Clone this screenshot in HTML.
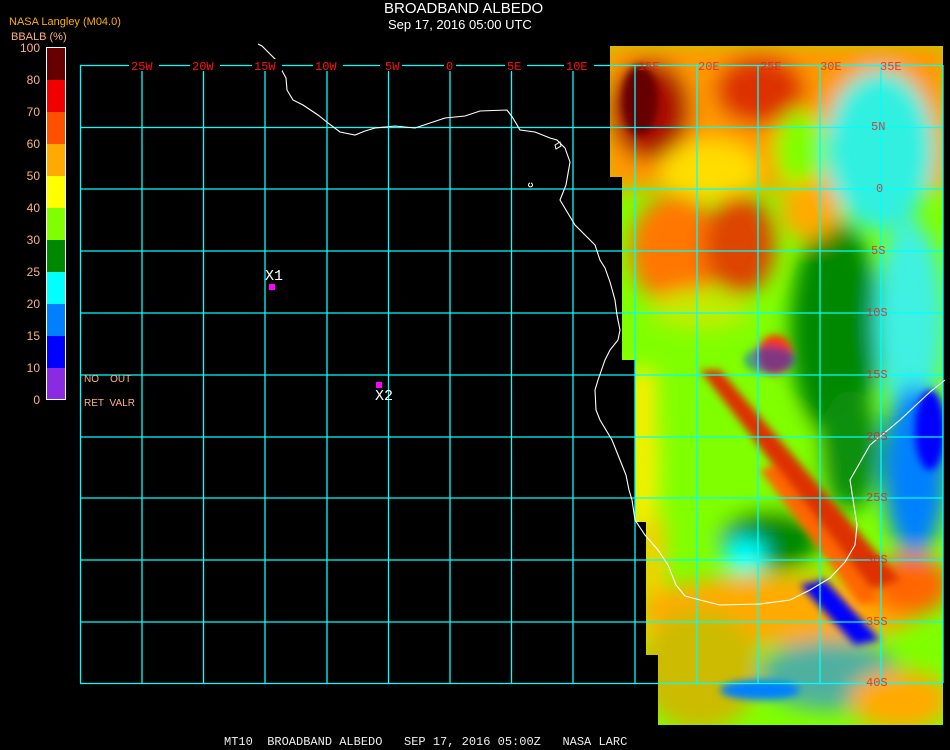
<!DOCTYPE html>
<html><head><meta charset="utf-8"><style>
html,body{margin:0;padding:0;background:#000;width:950px;height:750px;overflow:hidden}
body{position:relative;font-family:"Liberation Sans",sans-serif}
.t{position:absolute;color:#fff;font-size:14px;white-space:nowrap}
</style></head><body>
<svg width="950" height="750" style="position:absolute;left:0;top:0">
<defs>
<clipPath id="dc"><polygon points="610,46 943,46 943,725 658,725 658,655 646,655 646,522 635,522 635,360 622,360 622,177 610,177"/></clipPath>
<filter id="bl" x="-50%" y="-50%" width="200%" height="200%"><feGaussianBlur stdDeviation="10"/></filter>
<filter id="bs" x="-50%" y="-50%" width="200%" height="200%"><feGaussianBlur stdDeviation="4"/></filter>
</defs>
<g clip-path="url(#dc)">
<rect x="600" y="40" width="350" height="700" fill="#80ff00"/>
<g filter="url(#bl)">
<rect x="600" y="40" width="350" height="150" fill="#ff9900"/>
<ellipse cx="650" cy="110" rx="40" ry="50" fill="#aa1100"/>
<ellipse cx="760" cy="90" rx="45" ry="35" fill="#dd3300"/>
<ellipse cx="710" cy="170" rx="50" ry="30" fill="#ffdd00"/>
<ellipse cx="880" cy="150" rx="55" ry="80" fill="#30f0e0"/>
<ellipse cx="800" cy="150" rx="25" ry="40" fill="#80ff00"/>
<ellipse cx="675" cy="250" rx="45" ry="55" fill="#ff7700"/>
<ellipse cx="740" cy="245" rx="35" ry="50" fill="#dd4400"/>
<ellipse cx="700" cy="310" rx="50" ry="20" fill="#c0ee00"/>
<ellipse cx="835" cy="330" rx="45" ry="110" fill="#008800"/>
<ellipse cx="910" cy="320" rx="35" ry="100" fill="#40f0e0"/>
<ellipse cx="915" cy="470" rx="32" ry="85" fill="#0080ff"/>
<ellipse cx="850" cy="450" rx="30" ry="60" fill="#109010"/>
<ellipse cx="810" cy="210" rx="30" ry="30" fill="#ffaa00"/>
<rect x="628" y="370" width="28" height="160" fill="#ffee00"/>
<rect x="640" y="520" width="25" height="140" fill="#ffcc00"/>
<ellipse cx="740" cy="470" rx="80" ry="70" fill="#80ff00"/>
<ellipse cx="770" cy="540" rx="50" ry="30" fill="#008800"/>
<ellipse cx="780" cy="610" rx="140" ry="35" fill="#ffaa00"/>
<ellipse cx="700" cy="670" rx="60" ry="60" fill="#ccbb00"/>
<ellipse cx="830" cy="675" rx="70" ry="35" fill="#50b0a0"/>
<ellipse cx="900" cy="700" rx="50" ry="30" fill="#ffaa00"/>
<ellipse cx="910" cy="585" rx="40" ry="30" fill="#ff6600"/>
<ellipse cx="745" cy="555" rx="22" ry="18" fill="#00ffff"/>
</g>
<g filter="url(#bs)">
<polygon points="700,370 720,370 900,580 870,590" fill="#dd3300"/>
<polygon points="760,470 775,465 880,600 860,605" fill="#ff6600"/>
<polygon points="800,585 825,580 880,640 855,645" fill="#0000ff"/>
<ellipse cx="640" cy="100" rx="18" ry="35" fill="#660000"/>
<ellipse cx="775" cy="355" rx="18" ry="20" fill="#ff3300"/>
<ellipse cx="770" cy="360" rx="26" ry="14" fill="#0040ff" opacity=".5"/>
<ellipse cx="930" cy="430" rx="15" ry="40" fill="#0000ff"/>
<ellipse cx="760" cy="690" rx="40" ry="10" fill="#0080ff"/>
</g>
</g>
<g stroke="#00ffff" stroke-width="1.3" fill="none">
<path d="M80.5 65v618M142 65v618M203.5 65v618M265 65v618M327 65v618M388.5 65v618M450 65v618M511.5 65v618M573 65v618M635 65v618M697 65v618M758 65v618M820 65v618M881 65v618M943 65v618"/>
<path d="M80 65.5h863M80 127.5h863M80 189h863M80 251h863M80 313h863M80 375h863M80 437h863M80 498h863M80 560h863M80 622h863M80 683.5h863"/>
</g>
<path fill="none" stroke="#fff" stroke-width="1.1" d="M258 44L262 46L265 49L270 54L276 60L280 67L286 78L287 90L293 100L303 105L318 115L328 123L340 132L355 135L365 131L375 128L395 126L415 128L430 123L445 118L465 116L480 111L507 110L513 118L520 130L535 132L550 138L557 140L565 148L570 162L566 185L560 200L575 225L595 245L600 260L605 268L610 282L615 300L617 315L620 330L618 340L610 350L605 360L598 380L595 390L596 410L600 420L612 440L620 460L626 475L629 490L632 500L635 520L645 535L658 550L668 565L676 585L685 596L700 600L720 605L760 604L790 600L810 590L830 578L845 562L855 545L857 525L850 480L870 445L900 420L930 392L945 380"/>
<path fill="none" stroke="#fff" stroke-width="1" d="M555 145l5 -3l1 4l-5 3z M530 183a2 2 0 1 0 1 0"/>
<rect x="269" y="284" width="6" height="6" fill="#ff00ff"/>
<rect x="376" y="382" width="6" height="6" fill="#ff00ff"/>
<rect x="46.5" y="47.5" width="19" height="352" fill="none" stroke="#fff"/>
<rect x="47" y="48" width="18" height="32" fill="#660000"/>
<rect x="47" y="80" width="18" height="32" fill="#f00000"/>
<rect x="47" y="112" width="18" height="32" fill="#ff5000"/>
<rect x="47" y="144" width="18" height="32" fill="#ffaa00"/>
<rect x="47" y="176" width="18" height="32" fill="#ffff00"/>
<rect x="47" y="208" width="18" height="32" fill="#80ff00"/>
<rect x="47" y="240" width="18" height="32" fill="#008800"/>
<rect x="47" y="272" width="18" height="32" fill="#00ffff"/>
<rect x="47" y="304" width="18" height="32" fill="#0080ff"/>
<rect x="47" y="336" width="18" height="32" fill="#0000ff"/>
<rect x="47" y="368" width="18" height="31" fill="#8a2be2"/>
<g font-family="Liberation Mono, monospace" font-size="12" fill="#ff1010">
<g fill="#000"><rect x="129" y="59" width="30" height="12"/><rect x="190" y="59" width="30" height="12"/><rect x="252" y="59" width="30" height="12"/><rect x="313" y="59" width="30" height="12"/><rect x="380" y="59" width="22" height="12"/><rect x="444" y="59" width="12" height="12"/><rect x="505" y="59" width="22" height="12"/><rect x="564" y="59" width="30" height="12"/></g>
<text x="131" y="70">25W</text><text x="192" y="70">20W</text><text x="254" y="70">15W</text><text x="315" y="70">10W</text><text x="385" y="70">5W</text><text x="446" y="70">0</text><text x="507" y="70">5E</text><text x="566" y="70">10E</text>
<g fill="#e02020" opacity="0.8">
<text x="638" y="70">15E</text><text x="698" y="70">20E</text><text x="760" y="70">25E</text><text x="820" y="70">30E</text><text x="880" y="70">35E</text>
<text x="871" y="130">5N</text><text x="876" y="192">0</text><text x="871" y="254">5S</text><text x="866" y="316">10S</text><text x="866" y="378">15S</text><text x="866" y="440">20S</text><text x="866" y="501">25S</text><text x="866" y="563">30S</text><text x="866" y="625">35S</text><text x="866" y="686">40S</text>
</g>
</g>
</svg>
<div class="t" style="left:9px;top:16px;font-size:11px;color:#ffb000">NASA Langley (M04.0)</div>
<div class="t" style="left:11px;top:31px;font-size:11px;color:#ffb080">BBALB (%)</div>
<div style="position:absolute;left:0;top:32px;width:40px;text-align:right;font-size:12px;color:#ffb080;line-height:32px;font-family:'Liberation Sans',sans-serif">
<div style="height:32px">100</div><div style="height:32px">80</div><div style="height:32px">70</div><div style="height:32px">60</div><div style="height:32px">50</div><div style="height:32px">40</div><div style="height:32px">30</div><div style="height:32px">25</div><div style="height:32px">20</div><div style="height:32px">15</div><div style="height:32px">10</div><div style="height:32px">0</div></div>
<div class="t" style="left:84px;top:374px;font-size:10px;color:#ffb080">NO&nbsp;&nbsp;&nbsp;&nbsp;OUT</div>
<div class="t" style="left:84px;top:398px;font-size:10px;color:#ffb080">RET&nbsp;&nbsp;VALR</div>
<div class="t" style="left:384px;top:0px;font-size:15px;color:#fff">BROADBAND ALBEDO</div>
<div class="t" style="left:388px;top:17px;font-size:13px;color:#fff">Sep 17, 2016 05:00 UTC</div>
<div class="t" style="left:265px;top:268px;font-size:15px;font-family:'Liberation Mono',monospace">X1</div>
<div class="t" style="left:375px;top:388px;font-size:15px;font-family:'Liberation Mono',monospace">X2</div>
<div class="t" style="left:224px;top:735px;font-size:12px;font-family:'Liberation Mono',monospace;color:#eee">MT10&nbsp;&nbsp;BROADBAND ALBEDO&nbsp;&nbsp;&nbsp;SEP 17, 2016 05:00Z&nbsp;&nbsp;&nbsp;NASA LARC</div>
</body></html>
